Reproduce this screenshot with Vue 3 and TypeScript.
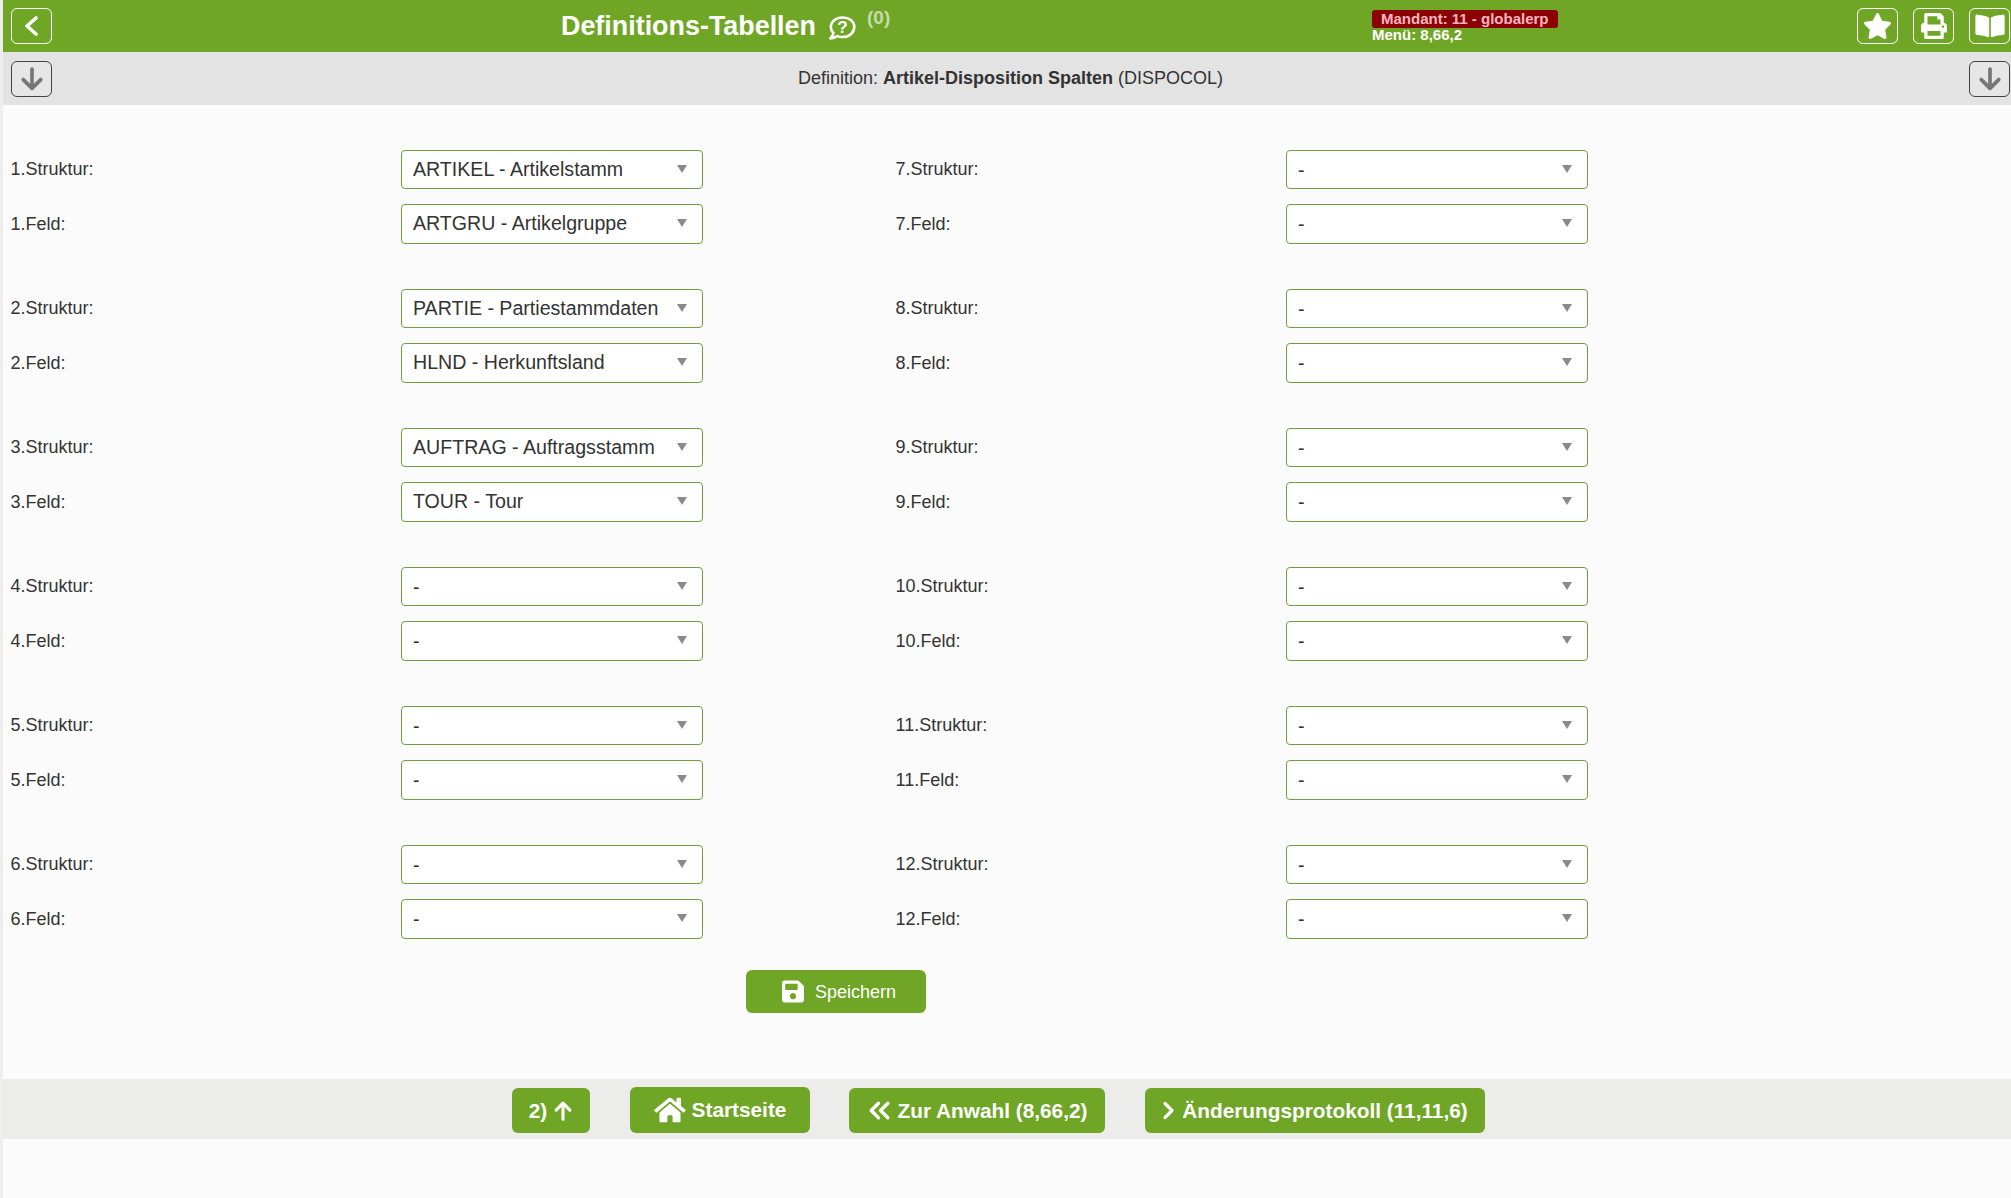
<script setup lang="ts">
interface Group { n: number; s: string; f: string }
const vals: [string, string][] = [
  ['ARTIKEL - Artikelstamm', 'ARTGRU - Artikelgruppe'],
  ['PARTIE - Partiestammdaten', 'HLND - Herkunftsland'],
  ['AUFTRAG - Auftragsstamm', 'TOUR - Tour'],
  ['-', '-'], ['-', '-'], ['-', '-']
]
const left: Group[] = vals.map((v, i) => ({ n: i + 1, s: v[0], f: v[1] }))
const right: Group[] = vals.map((_, i) => ({ n: i + 7, s: '-', f: '-' }))
const columns: Group[][] = [left, right]
</script>

<template>
  <div class="page">
    <header class="top">
      <button class="tbtn" aria-label="Zurück">
        <svg viewBox="0 0 24 24" width="24" height="24"><polyline points="16,4 7,12 16,20" fill="none" stroke="#fff" stroke-width="3.6" stroke-linecap="round" stroke-linejoin="round"/></svg>
      </button>
      <div class="title">
        <h1>Definitions-Tabellen</h1>
        <svg class="help" viewBox="0 0 26 24" width="28" height="26">
          <path d="M13.500 2.200C7.400 2.200 2.600 6 2.600 11c0 2.200.9 4.200 2.500 5.800-.4 1.800-1.400 3.400-2.900 4.900 2.600 0 4.800-.9 6.500-2.200 1.500.6 3.100.9 4.800.9 6.100 0 10.900-4 10.900-9.400S19.600 2.200 13.500 2.200z" fill="none" stroke="#fff" stroke-width="2.400" stroke-linejoin="round"/>
          <text x="13.500" y="16.500" text-anchor="middle" class="q">?</text>
        </svg>
        <sup class="count">(0)</sup>
      </div>
      <div class="mand">
        <div class="badge">Mandant: 11 - globalerp</div>
        <div class="menu">Menü: 8,66,2</div>
      </div>
      <button class="tbtn" aria-label="Favorit">
        <svg viewBox="0 0 576 512" width="29" height="26"><path fill="#fff" d="M259.3 17.8L194 150.2 47.9 171.5c-26.200 3.800-36.700 36.100-17.700 54.600l105.700 103-25 145.500c-4.500 26.300 23.200 46 46.400 33.700L288 439.600l130.700 68.700c23.200 12.200 50.900-7.400 46.400-33.700l-25-145.500 105.700-103c19-18.500 8.500-50.800-17.700-54.600L382 150.200 316.700 17.800c-11.700-23.600-45.600-23.900-57.400 0z"/></svg>
      </button>
      <button class="tbtn gap" aria-label="Drucken">
        <svg viewBox="0 0 512 512" width="26" height="26"><path fill="#fff" d="M448 192V77.250c0-8.490-3.370-16.620-9.370-22.630L393.370 9.370c-6-6-14.140-9.370-22.630-9.370H96C78.330 0 64 14.330 64 32v160c-35.350 0-64 28.650-64 64v112c0 8.840 7.160 16 16 16h48v96c0 17.670 14.330 32 32 32h320c17.670 0 32-14.330 32-32v-96h48c8.840 0 16-7.160 16-16V256c0-35.350-28.650-64-64-64zm-64 256H128v-96h256v96zm0-224H128V64h192v48c0 8.840 7.160 16 16 16h48v96zm48 72c-13.250 0-24-10.750-24-24 0-13.260 10.750-24 24-24s24 10.740 24 24c0 13.250-10.750 24-24 24z"/></svg>
      </button>
      <button class="tbtn gap" aria-label="Handbuch">
        <svg viewBox="0 0 576 512" width="30" height="26"><path fill="#fff" d="M542.220 32.050c-54.800 3.110-163.720 14.430-230.960 55.590-4.640 2.840-7.270 7.890-7.270 13.170v363.870c0 11.550 12.630 18.850 23.280 13.490 69.180-34.820 169.230-44.320 218.700-46.920 16.890-.89 30.020-14.430 30.020-30.660V62.750c.01-17.710-15.350-31.740-33.770-30.700zM264.730 87.640C197.500 46.480 88.580 35.170 33.780 32.050 15.360 31.010 0 45.040 0 62.750V400.600c0 16.240 13.130 29.780 30.020 30.660 49.490 2.600 149.590 12.110 218.770 46.950 10.620 5.350 23.210-1.940 23.210-13.460V100.630c0-5.290-2.620-10.140-7.270-12.990z"/></svg>
      </button>
    </header>

    <div class="sub">
      <button class="dbtn" aria-label="Runter">
        <svg viewBox="0 0 24 24" width="28" height="28"><path d="M12 3.500V20M4.500 12.500 12 20l7.500-7.500" fill="none" stroke="#777" stroke-width="3.200" stroke-linecap="round" stroke-linejoin="round"/></svg>
      </button>
      <div class="def">Definition: <b>Artikel-Disposition Spalten</b> (DISPOCOL)</div>
      <button class="dbtn" aria-label="Runter">
        <svg viewBox="0 0 24 24" width="28" height="28"><path d="M12 3.500V20M4.500 12.500 12 20l7.500-7.500" fill="none" stroke="#777" stroke-width="3.200" stroke-linecap="round" stroke-linejoin="round"/></svg>
      </button>
    </div>

    <main class="form">
      <div class="cols">
        <div v-for="(col, ci) in columns" :key="ci" class="col">
          <div v-for="g in col" :key="g.n" class="group">
            <div class="row">
              <label>{{ g.n }}.Struktur:</label>
              <div class="sel" :class="{ empty: g.s === '-' }"><span>{{ g.s }}</span><i class="tri"></i></div>
            </div>
            <div class="row feld">
              <label>{{ g.n }}.Feld:</label>
              <div class="sel" :class="{ empty: g.f === '-' }"><span>{{ g.f }}</span><i class="tri"></i></div>
            </div>
          </div>
        </div>
      </div>
      <button class="save">
        <svg viewBox="0 0 448 512" width="22" height="25"><path fill="#fff" d="M433.941 129.941l-83.882-83.882A48 48 0 0 0 316.118 32H48C21.490 32 0 53.490 0 80v352c0 26.510 21.490 48 48 48h352c26.510 0 48-21.490 48-48V163.882a48 48 0 0 0-14.059-33.941zM224 416c-35.346 0-64-28.654-64-64 0-35.346 28.654-64 64-64s64 28.654 64 64c0 35.346-28.654 64-64 64zm96-304.520V212c0 6.627-5.373 12-12 12H76c-6.627 0-12-5.373-12-12V108c0-6.627 5.373-12 12-12h228.520c3.183 0 6.235 1.264 8.485 3.515l3.480 3.480A11.996 11.996 0 0 1 320 111.480z"/></svg>
        <span>Speichern</span>
      </button>
    </main>

    <footer class="foot">
      <button class="fbtn b1">2)
        <svg viewBox="0 0 20 24" width="20" height="22"><path d="M10 21V3.500M2.500 11 10 3.500 17.500 11" fill="none" stroke="#fff" stroke-width="3.400" stroke-linecap="round" stroke-linejoin="round"/></svg>
      </button>
      <button class="fbtn b2 home">
        <svg viewBox="0 0 576 512" width="32" height="28"><path fill="#fff" d="M280.370 148.260L96 300.110V464a16 16 0 0 0 16 16l112.060-.29a16 16 0 0 0 15.920-16V368a16 16 0 0 1 16-16h64a16 16 0 0 1 16 16v95.640a16 16 0 0 0 16 16.050L464 480a16 16 0 0 0 16-16V300L295.670 148.260a12.190 12.190 0 0 0-15.300 0zM571.600 251.470L488 182.560V44.050a12 12 0 0 0-12-12h-56a12 12 0 0 0-12 12v72.610L318.470 43a48 48 0 0 0-61 0L4.340 251.470a12 12 0 0 0-1.600 16.900l25.500 31A12 12 0 0 0 45.150 301l235.220-193.740a12.190 12.190 0 0 1 15.300 0L530.900 301a12 12 0 0 0 16.900-1.600l25.500-31a12 12 0 0 0-1.700-16.930z"/></svg>
        Startseite
      </button>
      <button class="fbtn b3">
        <svg viewBox="0 0 24 20" width="25" height="21"><path d="M11 3 4 10l7 7M20 3l-7 7 7 7" fill="none" stroke="#fff" stroke-width="3.200" stroke-linecap="round" stroke-linejoin="round"/></svg>
        Zur Anwahl (8,66,2)
      </button>
      <button class="fbtn b4">
        <svg viewBox="0 0 14 20" width="14" height="21"><path d="M3 3l7 7-7 7" fill="none" stroke="#fff" stroke-width="3.200" stroke-linecap="round" stroke-linejoin="round"/></svg>
        Änderungsprotokoll (11,11,6)
      </button>
    </footer>
  </div>
</template>

<style scoped>
.page {
  min-height: 1198px;
  border-left: 3px solid #eeeeee;
  background: #fbfbfb;
  box-sizing: border-box;
  font-family: "Liberation Sans", Arial, sans-serif;
  color: #333;
}
button { font-family: inherit; padding: 0; cursor: pointer; }
.top {
  height: 52px;
  background: #70a625;
  display: flex;
  align-items: center;
  padding: 0 1px 0 8px;
  box-sizing: border-box;
}
.tbtn {
  width: 41px;
  height: 36px;
  box-sizing: border-box;
  border: 1px solid #fff;
  border-radius: 6px;
  background: transparent;
  display: flex;
  align-items: center;
  justify-content: center;
}
.tbtn.gap { margin-left: 15px; }
.title {
  display: flex;
  align-items: center;
  margin-left: 509px;
  width: 811px;
  color: #fff;
}
h1 {
  margin: 0;
  font-size: 26.900px;
  line-height: 52px;
  font-weight: 700;
}
.help { margin-left: 12px; margin-top: 4px; }
.q { font: 700 16px "Liberation Sans", Arial, sans-serif; fill: #fff; }
.count {
  align-self: flex-start;
  margin: 7px 0 0 11px;
  font-size: 19px;
  line-height: 22px;
  font-weight: 700;
  color: #c6dcab;
}
.mand {
  width: 485px;
  margin-top: -1px;
  font-size: 15px;
  font-weight: 700;
  color: #fff;
}
.badge {
  width: 186px;
  height: 18px;
  box-sizing: border-box;
  padding-left: 9px;
  line-height: 18px;
  border-radius: 3px;
  background: #8b0000;
  color: #ffb6c1;
}
.menu { line-height: 14px; }
.sub {
  height: 53px;
  background: #e3e3e3;
  display: flex;
  align-items: center;
  padding: 0 1px 0 8px;
  box-sizing: border-box;
}
.dbtn {
  width: 41px;
  height: 36px;
  box-sizing: border-box;
  border: 1px solid #444;
  border-radius: 6px;
  background: #e6e6e6;
  display: flex;
  align-items: center;
  justify-content: center;
}
.def { flex: 1; text-align: center; font-size: 18px; line-height: 53px; }
.form {
  padding: 45px 0 66px 7.500px;
}
.cols { display: flex; }
.col { width: 885px; }
.group { margin-bottom: 45px; }
.group:last-child { margin-bottom: 31px; }
.row { display: flex; align-items: center; height: 39px; }
.feld { height: 40px; margin-top: 15px; }
label {
  width: 390.500px;
  font-size: 18px;
  line-height: 22px;
  margin-top: -2px;
}
.feld label { margin-top: 0; }
.sel {
  width: 302px;
  height: 100%;
  box-sizing: border-box;
  border: 1px solid #6f9f3d;
  border-radius: 4px;
  background: #fff;
  display: flex;
  align-items: center;
  justify-content: space-between;
  padding: 0 15px 2px 11px;
  font-size: 19.600px;
  line-height: 24px;
}
.sel.empty { padding-bottom: 0; }
.sel.empty .tri { margin-top: -2px; }
.tri {
  width: 0;
  height: 0;
  border-left: 5px solid transparent;
  border-right: 5px solid transparent;
  border-top: 8px solid #8a8a8a;
}
.save {
  display: flex;
  align-items: center;
  margin-left: 735.500px;
  width: 180px;
  height: 43px;
  box-sizing: border-box;
  padding-left: 36px;
  border: 0;
  border-radius: 6px;
  background: #70a625;
  color: #fff;
  font-size: 18px;
}
.save span { margin: 2px 0 0 11px; }
.foot {
  height: 60px;
  background: #ecedeb;
  display: flex;
  align-items: flex-start;
  padding: 9px 0 0 509px;
  box-sizing: border-box;
}
.fbtn {
  height: 45px;
  box-sizing: border-box;
  border: 0;
  border-radius: 6px;
  background: #70a625;
  color: #fff;
  font-size: 20.800px;
  font-weight: 700;
  display: flex;
  align-items: center;
  justify-content: center;
  gap: 6px;
}
.b1 { width: 78px; }
.b2 { width: 180px; margin-left: 40px; }
.b3 { width: 256px; margin-left: 39px; }
.b4 { width: 340px; margin-left: 40px; }
.home { height: 46px; margin-top: -1px; }
</style>

<style>
html, body { margin: 0; background: #fbfbfb; }
</style>
